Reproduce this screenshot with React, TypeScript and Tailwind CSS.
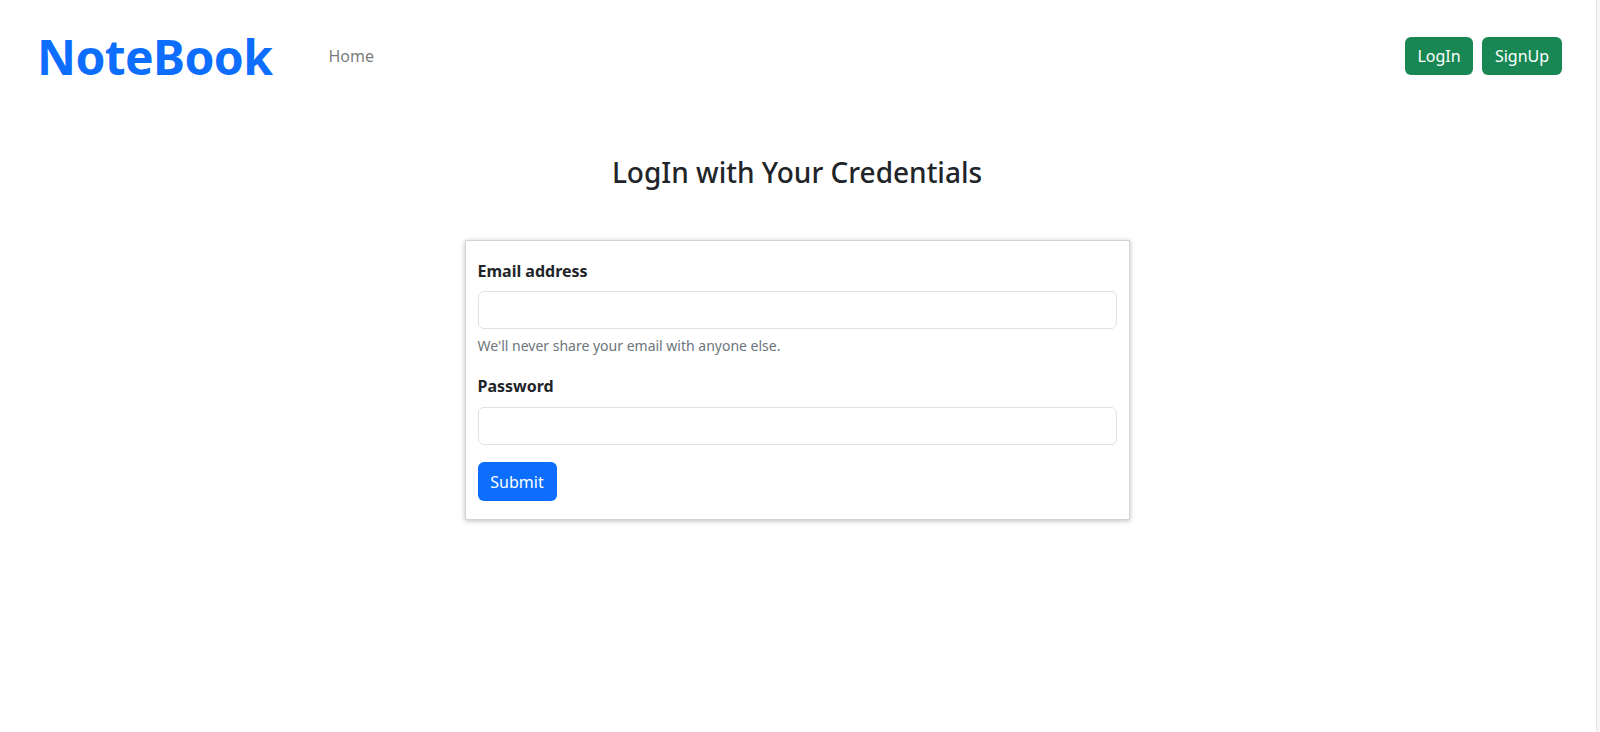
import React from 'react'

function Navbar() {
  return (
    <nav className='flex items-center justify-between h-[112px] pl-[37px] pr-[34px]'>
      <div className='flex items-center'>
        <a href='#' className='text-[#0d6efd] font-bold text-[48px] leading-none tracking-[-0.6px] mt-[2px]'>NoteBook</a>
        <ul className='flex ml-[56px]'>
          <li>
            <a href='#' className='text-[16px] text-[rgba(0,0,0,0.55)]'>Home</a>
          </li>
        </ul>
      </div>
      <div className='flex gap-[9px]'>
        <button className='h-[38px] w-[68px] rounded-[6px] bg-[#198754] text-white text-[16px]'>LogIn</button>
        <button className='h-[38px] w-[80px] rounded-[6px] bg-[#198754] text-white text-[16px]'>SignUp</button>
      </div>
    </nav>
  )
}

function LoginForm() {
  return (
    <div className='w-[665px] border border-[#d4d4d4] shadow-[0_1px_5px_rgba(0,0,0,0.25)] px-[12px] pt-[18px] pb-[18px]'>
      <form onSubmit={(e) => e.preventDefault()}>
        <div className='mb-[18px]'>
          <label className='block font-bold text-[16px] leading-[24px] mb-[8px] text-[#212529]'>Email address</label>
          <input type='email' className='block w-full h-[38px] border border-[#dee2e6] rounded-[6px] px-3 outline-none' />
          <div className='mt-[6px] text-[14px] leading-[21px] text-[#6c757d]'>We'll never share your email with anyone else.</div>
        </div>
        <div className='mb-[17px]'>
          <label className='block font-bold text-[16px] leading-[24px] mb-[9px] text-[#212529]'>Password</label>
          <input type='password' className='block w-full h-[38px] border border-[#dee2e6] rounded-[6px] px-3 outline-none' />
        </div>
        <button type='submit' className='h-[39px] w-[79px] rounded-[6px] bg-[#0d6efd] text-white text-[16px]'>Submit</button>
      </form>
    </div>
  )
}

export default function App() {
  return (
    <div className='flex min-h-[732px] bg-white font-["Noto_Sans",sans-serif] text-[#212529]'>
      <div className='flex-1 flex flex-col'>
        <Navbar />
        <div className='flex flex-col items-center pr-[2px]'>
          <h3 className='text-[28px] font-medium leading-[34px] mt-[43px] mb-[51px]'>LogIn with Your Credentials</h3>
          <LoginForm />
        </div>
      </div>
      {/* scrollbar gutter */}
      <div className='w-[4px] bg-[#f6f6f6] border-l border-[#e4e4e4]'></div>
    </div>
  )
}
